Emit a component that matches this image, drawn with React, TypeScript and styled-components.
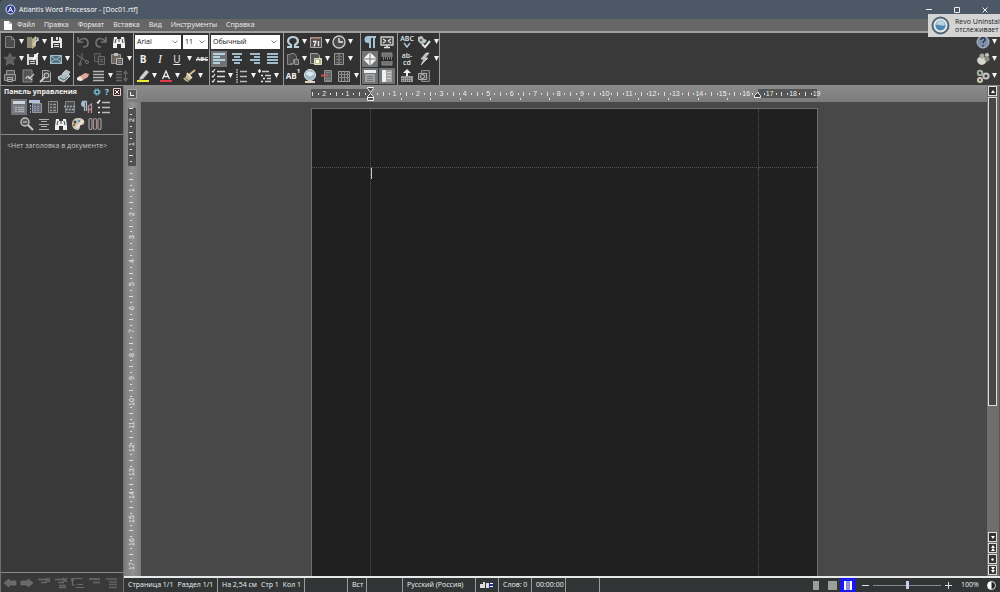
import React, { useEffect, useRef, useState } from "react";
import styled, { createGlobalStyle, css } from "styled-components";

const Global = createGlobalStyle`
  * { box-sizing: border-box; }
  html, body { margin: 0; background: #3c3c3c; }
  body, button, select, input { font-family: "Open Sans", "Noto Sans", sans-serif; font-size: 7px; line-height: 12px; color: #f0f0f0; }
  button { border: 0; background: none; padding: 0; margin: 0; display: flex; align-items: center; justify-content: center; }
  svg { display: block; }
`;

/* ---------- Icons ---------- */
const L = "#d4d8dc";
const D = "#727272";
const B = "#a3bccb";

const ico: Record<string, React.ReactNode> = {
  newDoc: <path d="M3.500 2.500h6l3 3v8h-9zM9.500 2.500v3h3" fill="#4b4b4b" stroke="#858585" />,
  open: <><path d="M2 3h5v11H2z" fill="#8d8977" /><path d="M7 5l4-3v10l-4 3z" fill="#bdb18a" /><path d="M8 11l5-6M10 4h3v3" stroke={L} fill="none" strokeWidth="1.2" /></>,
  save: <><path d="M3 3h9l2 2v9H3z" fill="#e8e8e8" /><path d="M5 3h6v4H5zM5 9h7v5H5z" fill="#3a3a3a" /><path d="M8 3h2v3H8z" fill="#ddd" /><path d="M6 10.500h5M6 12.500h5" stroke="#ddd" /></>,
  star: <path d="M8 2l2 4 4 .5-3 3 1 4.500-4-2-4 2 1-4.500-3-3L6 6z" fill="#606060" stroke="#777" strokeWidth=".6" />,
  saveAs: <><path d="M2 3h10l1 2v9H2z" fill="#d9d9d9" /><path d="M4 3h5v3H4zM4 9h7v5H4z" fill="#444" /><path d="M5 10.500h5M5 12.500h5" stroke="#ccc" /><path d="M8 9l5-7" stroke="#fff" strokeWidth="1.800" /></>,
  mail: <><path d="M2.500 4.500h11v8h-11z" fill="#54707e" stroke={B} /><path d="M2.500 4.500L8 9l5.500-4.500M2.500 12.500L6 8.500M13.500 12.500L10 8.500" stroke="#c4d8e0" fill="none" strokeWidth=".8" /></>,
  print: <><path d="M4.500 6V2.500h8v4M2.500 6.500h11v6h-11z" fill="#555" stroke="#999" /><path d="M5.500 9.500h5v4h-5z" fill="#555" stroke="#aaa" /><path d="M6 11.500h4" stroke="#aaa" /></>,
  docCheck: <><path d="M3 2h9v12H3z" fill="#555" stroke="#888" /><path d="M6 11c0-3 3-3 3 0M9 11l5-5M8 8l4 4" fill="none" stroke="#c8c8c8" strokeWidth="1.200" /></>,
  docFind: <><path d="M4.500 2.500h6l2 2v9h-8z" fill="#444" stroke="#aaa" /><circle cx="8.500" cy="7.500" r="2.500" fill="#555" stroke="#ddd" /><path d="M6.500 9.500L2 14" stroke="#ccc" strokeWidth="1.800" /></>,
  printFast: <><path d="M6 6l4-4 4 2-3 4M2 9l8-4 4 3-6 6-5-2z" fill="#a9b9bd" stroke="#d5e1e3" strokeWidth=".8" /><path d="M4 10l4 2 4-3" stroke="#536e78" fill="none" /></>,
  undo: <path d="M3 3v5h5M4 7c3-4 9-3 9 2 0 3-2 4-5 4" fill="none" stroke={D} strokeWidth="1.700" />,
  redo: <path d="M13 3v5H8M12 7C9 3 3 4 3 9c0 3 2 4 5 4" fill="none" stroke={D} strokeWidth="1.700" />,
  find: <><path d="M3 3h3v2h4V3h3l1 7v4h-4v-4H6v4H2v-4z" fill="#f0f0f0" /><path d="M8 5v3M5 5L4 9M11 5l1 4" stroke="#444" /></>,
  cut: <><path d="M2 4l9 6M7 2v5l-2 5" stroke={D} fill="none" /><circle cx="12" cy="11" r="1.500" fill="none" stroke={D} /><circle cx="5" cy="13" r="1.300" fill="none" stroke={D} /></>,
  copy: <><path d="M2.500 2.500h6v8h-6z" fill="#3c3c3c" stroke="#5f5f5f" /><path d="M6.500 5.500h6v8h-6z" fill="#3c3c3c" stroke="#6a6a6a" /><path d="M8 8.500h3M8 10.500h3" stroke="#666" /></>,
  paste: <><path d="M2.500 3.500h9v9h-9z" fill="#6b6658" stroke="#999" /><path d="M5 2h4v3H5z" fill="#bbb" /><path d="M7.500 7.500h6v6h-6z" fill="#555" stroke="#bbb" /><path d="M9 9.500h3M9 11.500h3" stroke="#999" /></>,
  eraser: <><path d="M2 10l8-5 4 1-1 3-7 4-4-1z" fill="#d9a898" /><path d="M2 10l3-2 3 4-2 1-4-1z" fill="#f2e4dc" /></>,
  lines: <path d="M2 3.500h11M2 6.500h11M2 9.500h11M2 12.500h11" stroke="#b4b4b4" strokeWidth="1.600" />,
  sort: <path d="M2 3.500h6M2 6.500h6M2 9.500h6M2 12.500h6M11.500 3v10M9.500 6l2-3 2 3M9.500 10l2 3 2-3" stroke="#686868" fill="none" strokeWidth="1.300" />,
  marker: <><path d="M2 12h12v2H2z" fill="#e9ed31" /><path d="M5 9l6-7 3 2-6 7-4 1z" fill="#d0d4d8" stroke="#777" strokeWidth=".5" /></>,
  fontColor: <><path d="M2 12h12v2H2z" fill="#e23a4b" /><path d="M4.500 11L8 3l3.500 8M6 8.500h4" fill="none" stroke="#ececec" strokeWidth="1.300" /></>,
  brush: <><path d="M8 7l6-5" stroke="#d5bd8e" strokeWidth="2" /><path d="M6 5l5 5-4 4c-2-1-4-2-5-4 3 0 3-2 4-5z" fill="#c9bd93" /><path d="M6 5l5 5" stroke="#f0e9cf" strokeWidth="1.500" /><path d="M4 10l4 3" stroke="#6b6248" /></>,
  alL: <path d="M2 3h12M2 6h7M2 9h12M2 12h7" stroke="#b5d0de" strokeWidth="2" />,
  alC: <path d="M3 3h10M5 6h6M3 9h10M5 12h6" stroke={B} strokeWidth="2" />,
  alR: <path d="M3 3h10M7 6h6M3 9h10M7 12h6" stroke={B} strokeWidth="2" />,
  alJ: <path d="M2 3h11M2 6h11M2 9h11M2 12h11" stroke={B} strokeWidth="2" />,
  bullets: <><path d="M6 3.500h8M6 8.500h8M6 13.500h8" stroke="#ddd" strokeWidth="1.500" /><path d="M1 3l1 1 2-3M1 8l1 1 2-3M1 13l1 1 2-3" fill="none" stroke="#ddd" strokeWidth="1.200" /></>,
  numbers: <><path d="M6 3.500h7M6 8.500h7M6 13.500h7" stroke="#bbb" strokeWidth="1.400" /><path d="M3 1v4M3 6v4M3 11v4" stroke="#bbb" strokeDasharray="1.500 1" strokeWidth="1.600" /></>,
  outline: <><path d="M5 3.500h7M8 7.500h6M10 10.500h4M8 13.500h6" stroke="#ccc" strokeWidth="1.400" /><path d="M1 3h3M4 7.500h2M6 10.500h2M4 13.500h2M2.500 1v4" stroke="#eee" strokeWidth="1.300" /></>,
  omega: <path d="M2 13h4v-2C1 8 3 3 8 3s7 5 2 8v2h4" fill="none" stroke="#b9cfdd" strokeWidth="2.200" />,
  calendar: <><path d="M2.500 3.500h11v10h-11z" fill="#55504e" stroke="#a8a8a8" /><path d="M3 4h10" stroke="#b98179" strokeWidth="2" strokeDasharray="1.500 1" /><path d="M5 7.500h3l-2 5M10.500 7v5" fill="none" stroke="#eee" strokeWidth="1.300" /></>,
  clock: <><circle cx="8" cy="8" r="6" fill="#4a4a4a" stroke="#cacaca" strokeWidth="1.400" /><path d="M8 4v4h4" stroke="#eee" fill="none" strokeWidth="1.300" /></>,
  docs: <><path d="M2.500 3.500h5v10h-5z" fill="#505050" stroke="#888" /><path d="M5.500 2.500h4l2 3v3h-3v4h-3" fill="#484848" stroke="#888" /><path d="M9.500 8.500h4v5h-4z" fill="#555" stroke="#999" /></>,
  image: <><path d="M2.500 2.500h7l2 2v8h-9z" fill="#555" stroke="#a5a5a5" /><path d="M6.500 7.500h7v6h-7z" fill="#b8b98b" stroke="#e0e0c0" /><path d="M8 9h3v3H8z" fill="#fff" /></>,
  column: <><path d="M3.500 2.500h9v11h-9z" fill="#474747" stroke="#969696" /><path d="M8 2v12" stroke="#999" /><path d="M5 5.500h2M5 8.500h2M5 11.500h2M9 5.500h2M9 8.500h2M9 11.500h2" stroke="#777" /></>,
  globe: <><circle cx="8" cy="7" r="5.500" fill="#9fb9c7" stroke="#e4e4dc" /><path d="M4 6c2-4 5-2 8-1-1 3-4 5-8 1" fill="#dce9ed" /><path d="M3 13h10v2H3z" fill="#dcd5bc" /></>,
  docRed: <><path d="M5.500 2.500h7v11h-7z" fill="#656565" stroke="#929292" /><path d="M2 7.500h7" stroke="#bd565d" strokeWidth="2" /><path d="M7 4.500h4M7 10.500h4M7 12.500h4" stroke="#888" /></>,
  table: <><path d="M2.500 3.500h11v10h-11z" fill="#424242" stroke="#a0a0a0" /><path d="M2 6.500h12M2 9.500h12M5.500 3v11M8.500 3v11M11.500 3v11" stroke="#8a8a8a" /></>,
  pilcrow: <><path d="M8 2v12M12 2v12M7 3h7" stroke="#a5c3d5" strokeWidth="2" /><path d="M8 2H6a3.500 3.500 0 000 7h2z" fill="#a5c3d5" /></>,
  fullscreen: <><path d="M2 3h12v8H2z" fill="#434343" stroke="#ccc" strokeWidth="1.400" /><path d="M4 5l3 2M12 5L9 7M4 9l3-2M12 9L9 7M5 13.500h6M8 11v2" stroke="#e2e2e2" strokeWidth="1.400" /></>,
  diamond: <path d="M7.500 1.500v6h-6zM8.500 1.500l6 6h-6zM1.500 8.500h6v6zM8.500 8.500h6l-6 6z" fill="#f4f4f4" />,
  rulerDoc: <><path d="M3 2h10v12H3z" fill="#737373" stroke="#888" /><path d="M2 8h12" stroke="#292929" strokeWidth="4" /><path d="M4.500 6v3M6.500 6v2M8.500 6v3M10.500 6v2M12.500 6v3" stroke="#aaa" strokeWidth=".7" /></>,
  paneTop: <><path d="M2 2h12v3H2z" fill="#eee" /><path d="M3 6h10v8H3z" fill="#a0a0a0" /><path d="M5 8.500h6M5 10.500h6M5 12.500h6" stroke="#777" /></>,
  paneSide: <><path d="M3 2h10v12H3z" fill="#a4a4a4" /><path d="M3 2h4v12H3z" fill="#f0f0f0" /><path d="M8 4.500h4M8 7.500h4M8 10.500h4" stroke="#ccc" /></>,
  spellAuto: <><path d="M2 3l4-1 2 3 3 1-2 3-4 1-3-3z" fill="#bec8c4" /><path d="M6 10l3 3 5-6" stroke="#e4e4e4" strokeWidth="2" fill="none" /><circle cx="5" cy="6" r="1.500" fill="#626b67" /></>,
  flash: <path d="M10 2h3L9 7h3l-7 7 3-6H5z" fill="#c0c0b8" stroke="#eee" strokeWidth=".6" />,
  keyboard: <><path d="M8 1l4 4H9v3H7V5H4z" fill="#eee" /><path d="M2 8h12v6H2z" fill="#999" /><path d="M3 10.500h10M3 12.500h10" stroke="#555" strokeDasharray="1 1" /></>,
  camera: <><path d="M5.500 2.500h8v11h-8z" fill="#484848" stroke="#888" /><path d="M2.500 5.500h8v6h-8z" fill="#555" stroke="#aaa" /><circle cx="6.500" cy="8.500" r="2" fill="#444" stroke="#bbb" /></>,
  help: <><circle cx="8" cy="8" r="6" fill="#7e90aa" stroke="#b6c1ce" /><path d="M6 6c0-3 4-3 4-.5C10 7 8 7.500 8 9M8 11v1.500" stroke="#2c3648" strokeWidth="1.500" fill="none" /></>,
  paw: <><path d="M2 9c2-5 8-4 10 0-1 6-9 7-10 0z" fill="#d6d5cc" /><circle cx="7" cy="5" r="2.500" fill="#a7a79c" /><circle cx="12" cy="4" r="2" fill="#c9c8be" /><circle cx="12" cy="8" r="2.500" fill="#8a8a80" /></>,
  gears: <><circle cx="5" cy="5" r="2.200" fill="none" stroke="#9fb29a" strokeWidth="2" /><circle cx="11" cy="8" r="2.600" fill="none" stroke="#c7c7c7" strokeWidth="2" /><circle cx="5" cy="12" r="2" fill="none" stroke="#d0cbb8" strokeWidth="2" /></>,
  gear: <><circle cx="8" cy="8" r="4" fill="none" stroke="#72bcd4" strokeWidth="3" /><circle cx="8" cy="8" r="6.500" fill="none" stroke="#72bcd4" strokeWidth="2" strokeDasharray="2.500 2.600" /></>,
  headings: <><path d="M2 2h12v3H2z" fill="#cdd6df" /><path d="M2 6h12v8H2z" fill="#7d8187" /><path d="M4 8.500h2M7 8.500h6M4 10.500h2M7 10.500h6M4 12.500h2M7 12.500h6" stroke="#b0b5bc" /></>,
  listDoc: <><path d="M1 1h11v3H1z" fill="#b1c2e0" /><path d="M4.500 4.500h9v9h-9z" fill="#6e6e78" stroke="#999" /><path d="M2.500 6v8M6 7.500h6M6 9.500h6M6 11.500h6" stroke="#8ba0c6" strokeDasharray="2 1" /></>,
  docLines: <><path d="M3.500 2.500h9v11h-9z" fill="#454545" stroke="#8f8f8f" /><path d="M5 5.500h2M8 5.500h3M5 8.500h2M8 8.500h3M5 11.500h2M8 11.500h3" stroke="#999" strokeWidth="1.400" /></>,
  clipsDoc: <><path d="M3.500 2.500h9v11h-9z" fill="#4d4d4d" stroke="#858585" /><path d="M2 7.500h12M4 10.500h8" stroke="#9caab4" strokeDasharray="2 1" strokeWidth="1.500" /></>,
  paraA: <><path d="M3 2.500h5M5.500 3v9M7.500 3v9" stroke="#aab9c7" strokeWidth="1.300" /><path d="M5 2a2.500 2.500 0 000 6z" fill="#aab9c7" /><path d="M9.500 14V7l3-2v9M10 10.500h3" stroke="#b59196" strokeWidth="1.300" fill="none" /></>,
  bulletList: <><path d="M6 3.500h8M6 8.500h8M6 13.500h8" stroke="#bdbdbd" strokeWidth="1.400" /><path d="M1 3l1 1 2-3M2 8.500h2M2 13.500h2" stroke="#eee" strokeWidth="1.500" fill="none" /></>,
  zoom: <><circle cx="6" cy="6" r="4" fill="#555" stroke="#c2c2c2" strokeWidth="1.400" /><path d="M9 9l5 5" stroke="#ccc" strokeWidth="2" /><path d="M4 6h4" stroke="#ddd" /></>,
  centerLines: <path d="M3 3.500h10M5 5.500h6M3 8.500h10M5 10.500h6M3 13.500h10" stroke="#b0b0b0" strokeWidth="1.200" />,
  palette: <><path d="M8 2c9 0 7 8 3 7-2 0 0 4-3 5-8 0-8-12 0-12z" fill="#d3c8b8" /><circle cx="5" cy="6" r="1.500" fill="#50433c" /><circle cx="9" cy="5" r="1.300" fill="#6a91a7" /><circle cx="4" cy="9" r="1.300" fill="#80704c" /><path d="M7 12l6-8" stroke="#f4e9db" strokeWidth="1.500" /></>,
  clips: <><path d="M2 12V4a1.500 1.500 0 013 0v8a1.500 1.500 0 01-3 0M11 12V4a1.500 1.500 0 013 0v8a1.500 1.500 0 01-3 0" fill="none" stroke="#a0a0a0" strokeWidth="1.200" /><path d="M6.500 12V4a1.500 1.500 0 013 0v8a1.500 1.500 0 01-3 0" fill="none" stroke="#b08685" strokeWidth="1.200" /></>,
  left: <path d="M2 8l5-4v2h7v4H7v2z" fill="#686868" stroke="#7c7c7c" strokeWidth=".6" />,
  right: <path d="M14 8L9 4v2H2v4h7v2z" fill="#686868" stroke="#7c7c7c" strokeWidth=".6" />,
  delHead: <path d="M2 4.500h8M5 7.500h6M10 3l4 4M14 3l-4 4" stroke="#686868" strokeWidth="1.500" />,
  delAll: <path d="M2 4.500h8M5 7.500h6M6 10.500h7M6 12.500h7M10 3l4 4M14 3l-4 4" stroke="#686868" strokeWidth="1.500" />,
  promote: <path d="M1 3.500h11M2.500 4v6h3M7 9.500h6M6 12.500h8M1 6l1.500-2L4 6" stroke="#6a6a6a" strokeWidth="1.200" fill="none" />,
  headTop: <path d="M2 4h11M6 7.500h7" stroke="#606060" strokeWidth="2" />,
  headAll: <path d="M2 4h11M5 7h8M5 9.500h8M5 12.500h8" stroke="#646464" strokeWidth="1.600" />,
};

const Icon = ({ name, size = 16 }: { name: string; size?: number }) => (
  <svg width={size} height={size} viewBox="0 0 16 16" fill="none" aria-hidden="true">{ico[name]}</svg>
);

/* ---------- Shell ---------- */
const Shell = styled.div`
  display: flex;
  flex-direction: column;
  height: 100vh;
  background: #3b3b3b;
  position: relative;
  overflow: hidden;
`;
const TitleBar = styled.header`
  flex: none;
  display: flex;
  align-items: center;
  height: 19px;
  padding-left: 5px;
  gap: 3px;
  background: #4d5866;
  border-radius: 4px 0 0 0;
  h1 { flex: 1; margin: 0; font-size: 7px; font-weight: 400; color: #ffffff; }
`;
const WindowButtons = styled.div`
  display: flex;
  padding-right: 1px;
`;
const WindowButton = styled.button`
  width: 28px;
  height: 19px;
`;
const MenuBar = styled.nav`
  flex: none;
  display: flex;
  align-items: center;
  height: 12px;
  padding-left: 4px;
  gap: 9px;
  background: #666666;
  svg { margin-right: -4px; }
`;
const MenuItem = styled.button`
  height: 12px;
`;

/* ---------- Toolbar ---------- */
const Toolbar = styled.div`
  flex: none;
  display: flex;
  height: 55px;
  background: #323232;
  border-top: 2px solid #a0a0a0;
  border-left: 1px solid #8a8a8a;
  border-bottom: 1px solid #8a8a8a;
`;
const Group = styled.div<{ $w: number }>`
  flex: none;
  width: ${(p) => p.$w}px;
  border-right: 1px solid #9a9a9a;
  padding-left: 1px;
`;
const Spacer = styled.div`
  flex: 1;
  background: #3a3a3a;
`;
const EndGroup = styled.div`
  flex: none;
  width: 25px;
  background: #3a3a3a;
`;
const Row = styled.div<{ $gap?: number }>`
  display: flex;
  align-items: center;
  height: 17px;
  gap: ${(p) => p.$gap ?? 0}px;
`;
const Tool = styled.button<{ $on?: boolean }>`
  flex: none;
  width: 16px;
  height: 16px;
  ${(p) => p.$on && css`background: #707476;`}
`;
const Letter = styled(Tool)<{ $k: "b" | "i" | "u" | "s" | "x" }>`
  font-size: ${(p) => (p.$k === "s" ? 6 : p.$k === "x" ? 8 : 10)}px;
  font-weight: 700;
  ${(p) => p.$k === "i" && css`font-style: italic; font-weight: 400; font-family: "Liberation Serif", serif; font-size: 12px;`}
  ${(p) => p.$k === "u" && css`text-decoration: underline; font-weight: 400;`}
  ${(p) => p.$k === "s" && css`text-decoration: line-through;`}
  sup { font-size: 6px; line-height: 6px; align-self: flex-start; }
`;
const Stack = styled(Tool)`
  flex-direction: column;
  line-height: 7px;
  font-weight: 600;
  color: #dfe6ea;
`;
const ArrowButton = styled.button`
  flex: none;
  width: 7px;
  height: 16px;
`;
const Arrow = () => (
  <ArrowButton aria-label="Ещё">
    <svg width="5" height="5" viewBox="0 0 5 5"><path d="M0 0h5L2.500 5z" fill="#f4f4f4" /></svg>
  </ArrowButton>
);
const SelectWrap = styled.label<{ $w: number }>`
  display: grid;
  width: ${(p) => p.$w}px;
  height: 14px;
  align-items: center;
  background: #ffffff;
  select, svg { grid-area: 1 / 1; }
  svg { justify-self: end; margin-right: 3px; pointer-events: none; }
  select {
    appearance: none;
    width: 100%;
    height: 14px;
    border: 0;
    padding: 0 0 0 2px;
    background: transparent;
    color: #111111;
  }
`;
const Combo = ({ label, value, w }: { label: string; value: string; w: number }) => (
  <SelectWrap $w={w}>
    <select aria-label={label} defaultValue={value}><option>{value}</option></select>
    <svg width="6" height="4" viewBox="0 0 6 4"><path d="M.5.5L3 3 5.500.5" fill="none" stroke="#666" strokeWidth=".8" /></svg>
  </SelectWrap>
);

/* "name" is a plain tool, "name+" is a pressed one, "v" is a drop-down arrow */
const Tools = ({ list, gap }: { list: string[]; gap?: number }) => (
  <Row $gap={gap}>
    {list.map((n, i) =>
      n === "v" ? <Arrow key={i} /> : <Tool key={i} $on={n.endsWith("+")} aria-label={n}><Icon name={n.replace("+", "")} /></Tool>
    )}
  </Row>
);

/* ---------- Body ---------- */
const Body = styled.div`
  flex: 1;
  min-height: 0;
  display: flex;
`;
const Panel = styled.aside`
  flex: none;
  width: 124px;
  display: flex;
  flex-direction: column;
  background: #393939;
  border: solid #707070;
  border-width: 0 1px;
`;
const PanelHead = styled.div`
  display: flex;
  align-items: center;
  height: 11px;
  padding: 0 2px 0 3px;
  gap: 2px;
  h2 { flex: 1; margin: 0; font-size: 7px; font-weight: 700; white-space: nowrap; }
`;
const HeadButton = styled.button<{ $c?: string }>`
  width: 8px;
  height: 10px;
  font-size: 9px;
  font-weight: 700;
  color: ${(p) => p.$c ?? "#eee"};
`;
const PanelTools = styled.div`
  display: flex;
  flex-direction: column;
  align-items: center;
  height: 38px;
  padding-top: 1px;
  padding-right: 2px;
  border-bottom: 1px solid #8a8a8a;
`;
const PanelNote = styled.p`
  flex: 1;
  margin: 0;
  padding: 5px 0 0 6px;
  color: #c4c4c4;
  white-space: nowrap;
`;
const PanelFoot = styled.div`
  height: 20px;
  display: flex;
  align-items: center;
  padding-left: 1px;
  gap: 1px;
  border-top: 1px solid #8a8a8a;
`;
const Main = styled.main`
  flex: 1;
  min-width: 0;
  display: flex;
  flex-direction: column;
`;
const Editor = styled.div`
  flex: 1;
  min-height: 0;
  display: flex;
`;
const EditorColumn = styled.div`
  flex: 1;
  min-width: 0;
  display: flex;
  flex-direction: column;
`;
const RulerBar = styled.div`
  flex: none;
  display: flex;
  height: 16px;
  background: linear-gradient(#8b8b8b, #7b7b7b);
`;
const Corner = styled.button`
  flex: none;
  width: 10px;
  height: 10px;
  margin: 3px 4px 0 3px;
  border: 1px solid #a4a4a4;
  background: #595959;
`;
const RulerCenter = styled.div`
  flex: 1;
  display: flex;
  justify-content: center;
`;
const Work = styled.div`
  flex: 1;
  min-height: 0;
  display: flex;
`;
const SideRuler = styled.div`
  flex: none;
  width: 17px;
  overflow: hidden;
  background: linear-gradient(90deg, #7b7b7b, #919191 50%, #7b7b7b);
`;
const Canvas = styled.div`
  flex: 1;
  display: flex;
  justify-content: center;
  padding-top: 6px;
  background: #484848;
  overflow: hidden;
`;
const Page = styled.article`
  flex: none;
  width: 507px;
  display: grid;
  grid-template: 59px 1fr / 59px 388px 1fr;
  background: #202020;
  border: solid #6c6c6c;
  border-width: 1px 1px 0;
`;
const Cell = styled.div<{ $r?: boolean; $b?: boolean }>`
  border: 0 dotted #505050;
  border-right-width: ${(p) => (p.$r ? 1 : 0)}px;
  border-bottom-width: ${(p) => (p.$b ? 1 : 0)}px;
`;
const Caret = styled.div`
  width: 1px;
  height: 11px;
  background: #cccccc;
`;

const CM = 23.45;
const HRuler = () => {
  const marks: React.ReactNode[] = [];
  for (let q = -10; q <= 76; q++) {
    const x = 60 + (q * CM) / 4;
    if (x < 1 || q === 0) continue;
    if (q % 4 === 0)
      marks.push(<text key={q} x={x} y="10" textAnchor="middle" fontSize="7" fill="#eeeeee">{Math.abs(q / 4)}</text>);
    else {
      const half = q % 2 === 0;
      marks.push(<rect key={q} x={Math.round(x)} y={half ? 6 : 7} width="1" height={half ? 4 : 2} fill="#dddddd" />);
    }
  }
  return (
    <svg width="507" height="16" viewBox="0 0 507 16" overflow="visible" fontFamily="Liberation Sans, sans-serif">
      <path d="M0 3h60v9H0zM447 3h59v9h-59z" fill="#555" />
      {marks}
      {Array.from({ length: 12 }, (_, i) => <rect key={i} x={Math.round(60 + (i + 1) * 29.700)} y="12" width="1" height="2" fill="#ddd" />)}
      <path d="M56.500 1.500h6v1l-3 4-3-4zM59.500 7.500l3 3v4h-6v-4zM56.500 11.500h6" fill="#505050" stroke="#eee" />
      <path d="M446.500 6.500l3 3v2h-6v-2z" fill="#444" stroke="#eee" />
    </svg>
  );
};
const VRuler = () => {
  const box = useRef<HTMLDivElement>(null);
  const [h, setH] = useState(474);
  useEffect(() => {
    const fit = () => box.current && setH(box.current.clientHeight);
    fit();
    window.addEventListener("resize", fit);
    return () => window.removeEventListener("resize", fit);
  }, []);
  const marks: React.ReactNode[] = [];
  for (let q = -10; 65 + (q * CM) / 4 < h - 5; q++) {
    const y = 65 + (q * CM) / 4;
    if (q === 0) continue;
    if (q % 4 === 0)
      marks.push(<text key={q} transform={`translate(10 ${Math.round(y)}) rotate(-90)`} textAnchor="middle" fontSize="7" fill="#eeeeee">{Math.abs(q / 4)}</text>);
    else {
      const half = q % 2 === 0;
      marks.push(<rect key={q} x={half ? 5 : 6} y={Math.round(y)} width={half ? 4 : 2} height="1" fill="#dddddd" />);
    }
  }
  return (
    <SideRuler ref={box}>
      <svg width="17" height={h} fontFamily="Liberation Sans, sans-serif">
        <path d="M4 6h8v58H4z" fill="#505050" />
        {marks}
      </svg>
    </SideRuler>
  );
};

/* ---------- Scrollbar ---------- */
const Scroll = styled.div`
  flex: none;
  width: 13px;
  display: flex;
  flex-direction: column;
  align-items: stretch;
  padding: 0 2px 0 1px;
  background: #6e6e6e;
  border-right: 1px solid #555;
`;
const ScrollButton = styled.button`
  flex: none;
  height: 10px;
  background: #333;
  border: 1px solid #ddd;
  margin-bottom: 1px;
`;
const Thumb = styled.div`
  flex: 0 0 63%;
  background: #474747;
  border: 1px solid #ddd;
`;
const Track = styled.div`flex: 1;`;

/* ---------- Status bar ---------- */
const Status = styled.footer`
  flex: none;
  display: flex;
  height: 16px;
  background: #313535;
  border-top: 2px solid #e8e8e8;
`;
const Item = styled.span<{ $w: number }>`
  flex: none;
  width: ${(p) => p.$w}px;
  display: flex;
  align-items: center;
  gap: 4px;
  padding-left: 4px;
  white-space: nowrap;
  border-right: 1px solid #999;
`;
const Fill = styled.span`flex: 1;`;
const View = styled.button<{ $on?: boolean }>`
  width: 16px;
  height: 14px;
  background: ${(p) => (p.$on ? "#1818ef" : "transparent")};
`;
const ZoomBox = styled.div`
  display: flex;
  align-items: center;
  margin: 0 3px 0 4px;
  button { width: 11px; height: 14px; }
  span { width: 25px; margin-left: 7px; }
  input {
    appearance: none;
    width: 68px;
    height: 14px;
    margin: 0 2px;
    background: linear-gradient(#888, #888) center / 100% 1px no-repeat;
  }
  input::-webkit-slider-thumb {
    appearance: none;
    width: 3px;
    height: 8px;
    background: #c8d0f0;
  }
`;

/* ---------- Notification ---------- */
const Toast = styled.div`
  position: absolute;
  top: 14px;
  right: 0;
  width: 72px;
  height: 23px;
  display: flex;
  align-items: center;
  gap: 5px;
  padding-left: 3px;
  overflow: hidden;
  white-space: nowrap;
  background: #d4d4d4;
  color: #222222;
  line-height: 8px;
  svg { flex: none; }
`;

export default function App() {
  return (
    <Shell>
      <Global />
      <TitleBar>
        <svg width="11" height="11" viewBox="0 0 11 11"><circle cx="5.500" cy="5.500" r="4.500" fill="#27379b" stroke="#e9ebff" /><path d="M3.500 8l2-5 2 5M4.300 6.300h2.400" fill="none" stroke="#fff" /></svg>
        <h1>Atlantis Word Processor - [Doc01.rtf]</h1>
        <WindowButtons>
          <WindowButton aria-label="Свернуть"><svg width="6" height="7"><path d="M0 3.500h6" stroke="#eee" /></svg></WindowButton>
          <WindowButton aria-label="Развернуть"><svg width="6" height="6"><path d="M.5.5h5v5h-5z" fill="none" stroke="#eee" /></svg></WindowButton>
          <WindowButton aria-label="Закрыть"><svg width="6" height="6"><path d="M.5.5l5 5M5.500.5l-5 5" stroke="#eee" /></svg></WindowButton>
        </WindowButtons>
      </TitleBar>
      <MenuBar>
        <svg width="8" height="9" viewBox="0 0 8 9"><path d="M0 0h5l3 3v6H0z" fill="#fff" /><path d="M5 0v3h3" fill="#bbb" /></svg>
        {["Файл", "Правка", "Формат", "Вставка", "Вид", "Инструменты", "Справка"].map((m) => <MenuItem key={m}>{m}</MenuItem>)}
      </MenuBar>
      <Toolbar>
        <Group $w={73}>
          <Tools list={["newDoc", "v", "open", "v", "save"]} />
          <Tools list={["star", "v", "saveAs", "v", "mail", "v"]} />
          <Tools gap={2} list={["print", "docCheck", "docFind", "printFast"]} />
        </Group>
        <Group $w={60}>
          <Tools gap={2} list={["undo", "redo", "find"]} />
          <Tools gap={1} list={["cut", "copy", "paste", "v"]} />
          <Tools list={["eraser", "lines", "v", "sort"]} />
        </Group>
        <Group $w={76}>
          <Row $gap={2}><Combo label="Шрифт" value="Arial" w={46} /><Combo label="Размер" value="11" w={25} /></Row>
          <Row $gap={1}>
            <Letter $k="b">B</Letter><Letter $k="i">I</Letter><Letter $k="u">U</Letter><Arrow /><Letter $k="s">ABC</Letter>
          </Row>
          <Tools list={["marker", "v", "fontColor", "v", "brush", "v"]} />
        </Group>
        <Group $w={74}>
          <Row><Combo label="Стиль" value="Обычный" w={69} /></Row>
          <Tools gap={2} list={["alL+", "alC", "alR", "alJ"]} />
          <Tools list={["bullets", "v", "numbers", "v", "outline", "v"]} />
        </Group>
        <Group $w={77}>
          <Tools list={["omega", "v", "calendar", "v", "clock", "v"]} />
          <Tools list={["docs", "v", "image", "v", "column", "v"]} />
          <Row $gap={1}>
            <Letter $k="x">AB<sup>1</sup></Letter>
            <Tool aria-label="Ссылка"><Icon name="globe" /></Tool>
            <Tool aria-label="Разрыв"><Icon name="docRed" /></Tool>
            <Tool aria-label="Таблица"><Icon name="table" /></Tool>
            <Arrow />
          </Row>
        </Group>
        <Group $w={37}>
          <Tools gap={1} list={["pilcrow", "fullscreen"]} />
          <Tools gap={1} list={["diamond+", "rulerDoc"]} />
          <Tools gap={1} list={["paneTop+", "paneSide+"]} />
        </Group>
        <Group $w={42}>
          <Row $gap={1}>
            <Stack aria-label="Орфография"><span>ABC</span><svg width="8" height="6"><path d="M1 1l3 4 3-4" fill="none" stroke="#a7c1d0" strokeWidth="1.500" /></svg></Stack>
            <Tool aria-label="Автопроверка"><Icon name="spellAuto" /></Tool><Arrow />
          </Row>
          <Row $gap={1}>
            <Stack>ab-<br />cd</Stack>
            <Tool aria-label="Макрос"><Icon name="flash" /></Tool><Arrow />
          </Row>
          <Tools gap={1} list={["keyboard", "camera"]} />
        </Group>
        <Spacer />
        <EndGroup>
          <Tools list={["help", "v"]} />
          <Tools list={["paw", "v"]} />
          <Tools list={["gears", "v"]} />
        </EndGroup>
      </Toolbar>
      <Body>
        <Panel>
          <PanelHead>
            <h2>Панель управления</h2>
            <HeadButton aria-label="Настройки"><Icon name="gear" size={8} /></HeadButton>
            <HeadButton $c="#9ed0e4">?</HeadButton>
            <HeadButton aria-label="Закрыть панель"><svg width="8" height="8"><path d="M.5.5h7v7h-7z" fill="#3a2a28" stroke="#e8d0cc" /><path d="M2 2l4 4M6 2L2 6" stroke="#fff" /></svg></HeadButton>
          </PanelHead>
          <PanelTools>
            <Tools gap={1} list={["headings+", "listDoc", "docLines", "clipsDoc", "paraA", "bulletList"]} />
            <Tools gap={1} list={["zoom", "centerLines", "find", "palette", "clips"]} />
          </PanelTools>
          <PanelNote>&lt;Нет заголовка в документе&gt;</PanelNote>
          <PanelFoot>
            {["left", "right", "delHead", "delAll", "promote", "headTop", "headAll"].map((n) => <Tool key={n} aria-label={n}><Icon name={n} /></Tool>)}
          </PanelFoot>
        </Panel>
        <Main>
          <Editor>
            <EditorColumn>
              <RulerBar>
                <Corner aria-label="Табуляция"><svg width="4" height="4"><path d="M.5 0v3.500H4" fill="none" stroke="#fff" /></svg></Corner>
                <RulerCenter><HRuler /></RulerCenter>
              </RulerBar>
              <Work>
                <VRuler />
                <Canvas>
                  <Page>
                    <Cell $r $b /><Cell $r $b /><Cell $b />
                    <Cell $r /><Cell $r><Caret /></Cell><Cell />
                  </Page>
                </Canvas>
              </Work>
            </EditorColumn>
            <Scroll>
              <ScrollButton aria-label="Вверх"><svg width="4" height="3"><path d="M2 0l2 3H0z" fill="#fff" /></svg></ScrollButton>
              <Thumb />
              <Track />
              <ScrollButton aria-label="Вниз"><svg width="4" height="3"><path d="M2 3L0 0h4z" fill="#fff" /></svg></ScrollButton>
              <ScrollButton aria-label="Предыдущая"><svg width="4" height="6"><path d="M2 0l2 3H0zM2 3l2 3H0z" fill="#fff" /></svg></ScrollButton>
              <ScrollButton aria-label="Объект"><svg width="3" height="3"><circle cx="1.500" cy="1.500" r="1.200" fill="#fff" /></svg></ScrollButton>
              <ScrollButton aria-label="Следующая"><svg width="4" height="6"><path d="M2 3L0 0h4zM2 6L0 3h4z" fill="#fff" /></svg></ScrollButton>
            </Scroll>
          </Editor>
          <Status>
            <Item $w={94}><span>Страница 1/1</span><span>Раздел 1/1</span></Item>
            <Item $w={87}><span>На 2,54 см</span><span>Стр 1</span><span>Кол 1</span></Item>
            <Item $w={43} />
            <Item $w={19}>Вст</Item>
            <Item $w={36} />
            <Item $w={73}>Русский (Россия)</Item>
            <Item $w={23}><svg width="14" height="8" viewBox="0 0 14 8"><path d="M0 3h3V1h2v6H0z" fill="#ddd" /><path d="M6 2h3v5H6z" fill="#dde" /><path d="M10 1h3v6h-3z" fill="#2630a8" /><path d="M10 2.500h3M10 5.500h3" stroke="#fff" /></svg></Item>
            <Item $w={33}>Слов: 0</Item>
            <Item $w={34}>00:00:00</Item>
            <Item $w={34} />
            <Fill />
            <View aria-label="Черновик"><svg width="6" height="9"><path d="M0 0h6v9H0z" fill="#9a9f9c" /></svg></View>
            <View aria-label="Веб"><svg width="9" height="9"><path d="M0 0h9v9H0z" fill="#9a9f9c" /></svg></View>
            <View $on aria-label="Разметка"><svg width="8" height="9"><path d="M0 0h8v9H0z" fill="#8c8ce8" /><path d="M1 0v9M7 0v9" stroke="#fff" strokeWidth="2" /></svg></View>
            <ZoomBox>
              <button aria-label="Уменьшить"><svg width="7" height="7"><path d="M0 3.500h7" stroke="#ddd" /></svg></button>
              <input type="range" aria-label="Масштаб" min="0" max="100" defaultValue="50" />
              <button aria-label="Увеличить"><svg width="7" height="7"><path d="M0 3.500h7M3.500 0v7" stroke="#ddd" /></svg></button>
              <span>100%</span>
              <button aria-label="Контраст"><svg width="9" height="9"><circle cx="4.500" cy="4.500" r="4" fill="#222" stroke="#ddd" /><path d="M4.500.5a4 4 0 000 8z" fill="#fff" /></svg></button>
            </ZoomBox>
          </Status>
        </Main>
      </Body>
      <Toast role="status">
        <svg width="19" height="19" viewBox="0 0 19 19"><circle cx="9.500" cy="9.500" r="8" fill="#e2e8ea" stroke="#526471" strokeWidth="2" /><circle cx="9.500" cy="9.500" r="5" fill="#4e86b1" /><path d="M5 9c1-6 8-6 9 0-3 2-6-1-9 0z" fill="#b9d2e2" /></svg>
        <div>Revo Uninstaller<br />отслеживает изменения</div>
      </Toast>
    </Shell>
  );
}
